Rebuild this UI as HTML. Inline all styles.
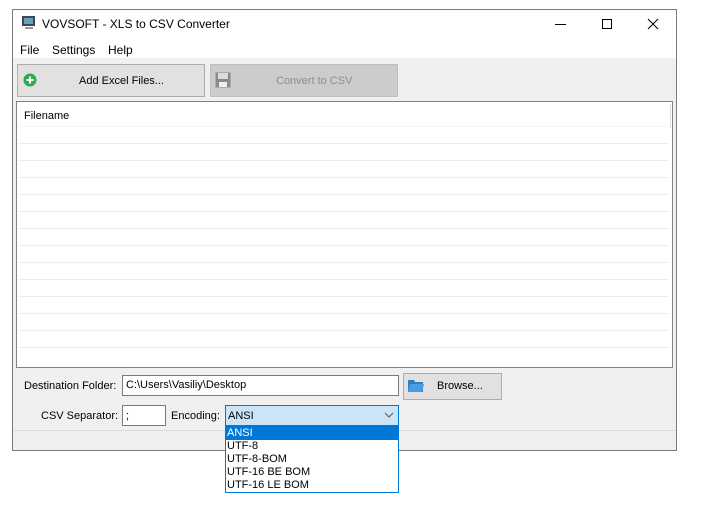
<!DOCTYPE html>
<html><head><style>
*{margin:0;padding:0;box-sizing:border-box}
body{width:701px;height:516px;background:#fff;font-family:"Liberation Sans",sans-serif;font-size:11px;color:#000;position:relative;overflow:hidden}
.a{position:absolute}
.win{left:12px;top:9px;width:665px;height:442px;border:1px solid #7a7a7a;background:#f0f0f0}
.btn{border:1px solid #adadad;background:#e1e1e1}
.line{position:absolute;left:1px;right:3px;height:1px;background:#ececec}
</style></head><body>
<div class="a win">
 <div class="a" style="left:0;top:0;width:663px;height:48px;background:#fff"></div>
</div>
<svg class="a" style="left:21px;top:15px" width="16" height="16"><rect x="1" y="1" width="13" height="10" fill="#3a4a55"/><rect x="3" y="3" width="9" height="6" fill="#6aa0b8"/><rect x="4" y="12" width="8" height="2" fill="#999"/></svg>
<div class="a" style="left:42px;top:17px;font-size:12px">VOVSOFT - XLS to CSV Converter</div>
<div class="a" style="left:555px;top:24px;width:11px;height:1px;background:#000"></div>
<div class="a" style="left:602px;top:19px;width:10px;height:10px;border:1px solid #000"></div>
<svg class="a" style="left:647px;top:18px" width="12" height="12"><path d="M1 1L11 11M11 1L1 11" stroke="#000" stroke-width="1"/></svg>
<div class="a" style="left:20px;top:43px;font-size:12px">File</div>
<div class="a" style="left:52px;top:43px;font-size:12px">Settings</div>
<div class="a" style="left:108px;top:43px;font-size:12px">Help</div>
<div class="a btn" style="left:17px;top:64px;width:188px;height:33px"></div>
<svg class="a" style="left:23px;top:73px" width="14" height="14"><circle cx="7" cy="7" r="6.5" fill="#2eaa4f"/><path d="M7 3.5V10.5M3.5 7H10.5" stroke="#fff" stroke-width="2"/></svg>
<div class="a" style="left:79px;top:75px">Add Excel Files...</div>
<div class="a" style="left:210px;top:64px;width:188px;height:33px;border:1px solid #bfbfbf;background:#cccccc"></div>
<svg class="a" style="left:215px;top:72px" width="16" height="16"><rect x="0.5" y="0.5" width="15" height="15" fill="#8a8a8a"/><rect x="3" y="1" width="10" height="6" fill="#ddd"/><rect x="4" y="10" width="8" height="5" fill="#eee"/></svg>
<div class="a" style="left:276px;top:75px;color:#8d8d8d">Convert to CSV</div>
<div class="a" style="left:16px;top:101px;width:657px;height:267px;border:1px solid #828282;background:#fff">
 <div class="a" style="left:7px;top:8px">Filename</div>
 <div class="line" style="top:24px;background:#f6f6f6"></div><div class="line" style="top:41px"></div><div class="line" style="top:58px"></div><div class="line" style="top:75px"></div><div class="line" style="top:92px"></div><div class="line" style="top:109px"></div><div class="line" style="top:126px"></div><div class="line" style="top:143px"></div><div class="line" style="top:160px"></div><div class="line" style="top:177px"></div><div class="line" style="top:194px"></div><div class="line" style="top:211px"></div><div class="line" style="top:228px"></div><div class="line" style="top:245px"></div>
 <div class="a" style="right:1px;top:2px;width:1px;height:24px;background:#ddd"></div>
</div>
<div class="a" style="left:24px;top:380px">Destination Folder:</div>
<div class="a" style="left:122px;top:375px;width:277px;height:21px;border:1px solid #7a7a7a;background:#fff;padding:3px 3px">C:\Users\Vasiliy\Desktop</div>
<div class="a btn" style="left:403px;top:373px;width:99px;height:27px"></div>
<svg class="a" style="left:408px;top:379px" width="16" height="14"><path d="M0 1H6L7 3H15V13H0Z" fill="#2d7fc4"/><path d="M2 5H16L14 13H0Z" fill="#4a9be0"/></svg>
<div class="a" style="left:437px;top:380px">Browse...</div>
<div class="a" style="left:41px;top:410px">CSV Separator:</div>
<div class="a" style="left:122px;top:405px;width:44px;height:21px;border:1px solid #7a7a7a;background:#fff;padding:4px 3px">;</div>
<div class="a" style="left:171px;top:410px">Encoding:</div>
<div class="a" style="left:225px;top:405px;width:174px;height:21px;border:1px solid #0078d7;background:#cce4f7;padding:4px 2px">ANSI</div>
<svg class="a" style="left:384px;top:411px" width="10" height="8"><path d="M1 2L5 6L9 2" stroke="#555" fill="none"/></svg>
<div class="a" style="left:13px;top:430px;width:663px;height:1px;background:#dadada"></div>
<div class="a" style="left:225px;top:425px;width:174px;height:68px;border:1px solid #0078d7;background:#fff;line-height:13px">
 <div style="background:#0078d7;color:#fff;padding-left:1px;padding-top:1px">ANSI</div>
 <div style="padding-left:1px">UTF-8</div>
 <div style="padding-left:1px">UTF-8-BOM</div>
 <div style="padding-left:1px">UTF-16 BE BOM</div>
 <div style="padding-left:1px">UTF-16 LE BOM</div>
</div>
</body></html>
